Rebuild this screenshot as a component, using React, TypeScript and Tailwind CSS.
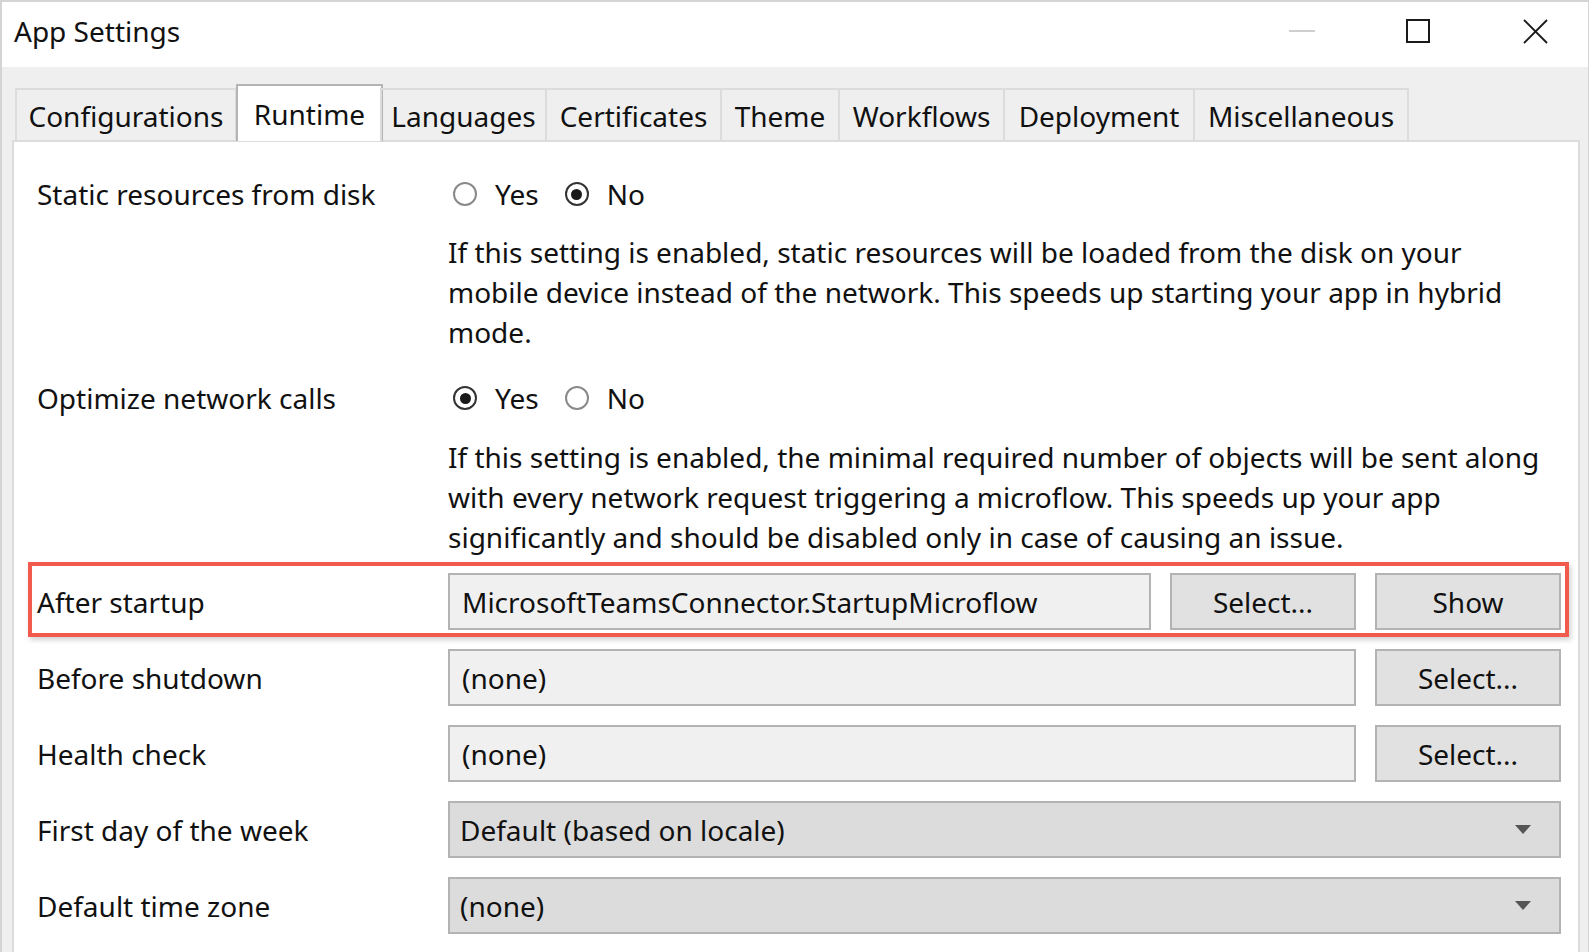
const tabs = [
  { name: 'Configurations', w: 'w-[222px]' },
  { name: 'Runtime', w: 'w-[147px]' },
  { name: 'Languages', w: 'w-[167px]' },
  { name: 'Certificates', w: 'w-[177px]' },
  { name: 'Theme', w: 'w-[120px]' },
  { name: 'Workflows', w: 'w-[167px]' },
  { name: 'Deployment', w: 'w-[192px]' },
  { name: 'Miscellaneous', w: 'w-[216px]' },
]

function Radio({ checked, label }: { checked: boolean; label: string }) {
  return (
    <div className="flex items-center">
      <span
        className={`w-[24px] h-[24px] rounded-full border-2 bg-white flex items-center justify-center ${
          checked ? 'border-[#333333]' : 'border-[#8a8a8a]'
        }`}
      >
        {checked && <span className="w-[11px] h-[11px] rounded-full bg-[#1a1a1a]" />}
      </span>
      <span className="ml-[18px]">{label}</span>
    </div>
  )
}

function RadioRow({ label, yes }: { label: string; yes: boolean }) {
  return (
    <div className="flex items-center h-[40px]">
      <div className="w-[411px]">{label}</div>
      <div className="flex items-center gap-[26px] ml-[5px]">
        <Radio checked={yes} label="Yes" />
        <Radio checked={!yes} label="No" />
      </div>
    </div>
  )
}

function Description({ lines, className }: { lines: string[]; className: string }) {
  return (
    <div className={`ml-[411px] leading-[40px] whitespace-nowrap ${className}`}>
      {lines.map((l) => (
        <div key={l}>{l}</div>
      ))}
    </div>
  )
}

function Field({ value }: { value: string }) {
  return (
    <div className="flex-1 h-[57px] bg-[#f0f0f0] border-2 border-[#b3b3b3] flex items-center pl-[12px]">
      {value}
    </div>
  )
}

function Button({ children }: { children: React.ReactNode }) {
  return (
    <button className="w-[186px] h-[57px] bg-[#e1e1e1] border-2 border-[#b3b3b3] flex items-center justify-center">
      {children}
    </button>
  )
}

function Dropdown({ value }: { value: string }) {
  return (
    <div className="flex-1 h-[57px] bg-[#dcdcdc] border-2 border-[#b3b3b3] flex items-center pl-[10px] pr-[28px]">
      <span className="flex-1">{value}</span>
      <svg width="16" height="9" viewBox="0 0 16 9">
        <path d="M0 0 H16 L8 9 Z" fill="#555555" />
      </svg>
    </div>
  )
}

export default function App() {
  return (
    <div className="w-[1592px] h-[952px] overflow-hidden bg-white font-['Noto_Sans',sans-serif] text-[28px] text-[#111111]">
      <div className="w-[1589px] h-full flex flex-col border-l-2 border-t-2 border-r border-[#d4d4d4]">
        {/* title bar */}
        <div className="h-[65px] bg-white flex items-center pl-[12px] pb-[7px] shrink-0">
          <span>App Settings</span>
          <div className="ml-auto flex items-center pr-[40px]">
            <span className="w-[26px] h-[2px] bg-[#cfcfcf]" />
            <span className="ml-[91px] w-[24px] h-[24px] border-2 border-[#1a1a1a]" />
            <svg className="ml-[93px]" width="25" height="25" viewBox="0 0 25 25">
              <path d="M1 1 L24 24 M24 1 L1 24" stroke="#1a1a1a" strokeWidth="1.8" />
            </svg>
          </div>
        </div>

        {/* tab strip + page */}
        <div className="flex-1 bg-[#efefef] flex flex-col pt-[17px] pr-[8px]">
          <div className="flex items-end pl-[13px] relative z-10 -mb-px">
            {tabs.map((t) =>
              t.name === 'Runtime' ? (
                <div
                  key={t.name}
                  className={`${t.w} h-[57px] bg-white border-2 border-b-0 border-[#b4b4b4] flex items-center justify-center -mx-px`}
                >
                  {t.name}
                </div>
              ) : (
                <div
                  key={t.name}
                  className={`${t.w} h-[53px] border-2 border-b-0 border-[#dcdcdc] -ml-[2px] first:ml-0 flex items-center justify-center`}
                >
                  {t.name}
                </div>
              )
            )}
          </div>

          <div className="flex-1 bg-white border-2 border-b-0 border-[#dcdcdc] ml-[10px] pl-[23px] pr-[17px]">
            <div className="mt-[32px]">
              <RadioRow label="Static resources from disk" yes={false} />
            </div>
            <Description
              className="mt-[18px]"
              lines={[
                'If this setting is enabled, static resources will be loaded from the disk on your',
                'mobile device instead of the network. This speeds up starting your app in hybrid',
                'mode.',
              ]}
            />

            <div className="mt-[26px]">
              <RadioRow label="Optimize network calls" yes={true} />
            </div>
            <Description
              className="mt-[19px]"
              lines={[
                'If this setting is enabled, the minimal required number of objects will be sent along',
                'with every network request triggering a microflow. This speeds up your app',
                'significantly and should be disabled only in case of causing an issue.',
              ]}
            />

            <div className="mt-[5px] -ml-[9px] -mr-[8px] border-4 border-[#f25a4d] pl-[5px] pr-[4px] pt-[7px] pb-[3px] shadow-[2px_3px_5px_rgba(0,0,0,0.18)]">
              <div className="flex items-center gap-[19px]">
                <div className="w-[392px]">After startup</div>
                <Field value="MicrosoftTeamsConnector.StartupMicroflow" />
                <Button>Select...</Button>
                <Button>Show</Button>
              </div>
            </div>

            <div className="mt-[12px] flex flex-col gap-[19px]">
              <div className="flex items-center gap-[19px]">
                <div className="w-[392px]">Before shutdown</div>
                <Field value="(none)" />
                <Button>Select...</Button>
              </div>
              <div className="flex items-center gap-[19px]">
                <div className="w-[392px]">Health check</div>
                <Field value="(none)" />
                <Button>Select...</Button>
              </div>
              <div className="flex items-center">
                <div className="w-[411px]">First day of the week</div>
                <Dropdown value="Default (based on locale)" />
              </div>
              <div className="flex items-center">
                <div className="w-[411px]">Default time zone</div>
                <Dropdown value="(none)" />
              </div>
            </div>
          </div>
        </div>
      </div>
    </div>
  )
}
